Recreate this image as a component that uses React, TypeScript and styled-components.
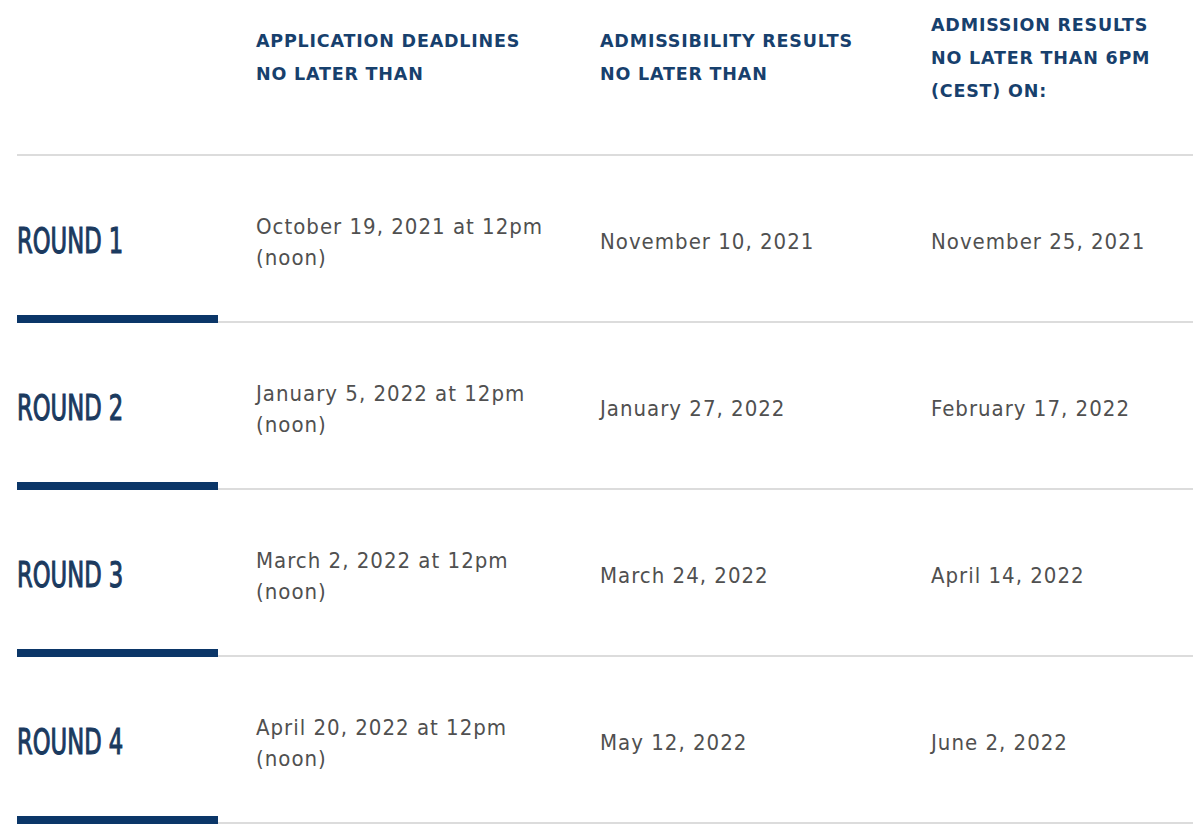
import React from "react";
import styled, { createGlobalStyle } from "styled-components";

const Global = createGlobalStyle`
  html, body { margin: 0; padding: 0; background: #ffffff; }
  body { font-family: "DejaVu Sans", sans-serif; }
`;

const Table = styled.div`
  width: 1176px;
  margin-left: 17px;
`;

const cols = "239px 344px 331px 1fr";

const HeaderRow = styled.div`
  display: grid;
  grid-template-columns: ${cols};
  align-items: center;
  box-sizing: border-box;
  height: 156px;
  padding-bottom: 38px;
  border-bottom: 2px solid #dcdcdc;
`;

const HeadCell = styled.div`
  font-family: "DejaVu Sans", sans-serif;
  font-weight: bold;
  font-size: 17.5px;
  line-height: 33px;
  letter-spacing: 0.8px;
  color: #17406d;
  text-transform: uppercase;
`;

const Row = styled.div`
  display: grid;
  grid-template-columns: ${cols};
  align-items: center;
  box-sizing: border-box;
  height: 167px;
  border-bottom: 2px solid #dcdcdc;
`;

const RoundCell = styled.div`
  align-self: stretch;
  width: 201px;
  box-sizing: border-box;
  display: flex;
  align-items: center;
  padding-top: 10px;
  border-bottom: 8px solid #0b3668;
  margin-bottom: -2px;
  position: relative;
`;

const RoundLabel = styled.span`
  display: inline-block;
  font-family: "DejaVu Sans Condensed", "DejaVu Sans", sans-serif;
  font-size: 36px;
  font-weight: normal;
  color: #1b3a5f;
  -webkit-text-stroke: 1.1px #1b3a5f;
  transform: scaleX(0.7);
  transform-origin: left center;
  white-space: nowrap;
`;

const DateCell = styled.div`
  font-family: "DejaVu Sans Condensed", "DejaVu Sans", sans-serif;
  font-size: 22px;
  line-height: 31px;
  color: #505050;
  letter-spacing: 1px;
  padding-top: 6px;
`;

type RoundData = {
  label: string;
  deadline: string;
  admissibility: string;
  admission: string;
};

const rounds: RoundData[] = [
  { label: "ROUND 1", deadline: "October 19, 2021 at 12pm", admissibility: "November 10, 2021", admission: "November 25, 2021" },
  { label: "ROUND 2", deadline: "January 5, 2022 at 12pm", admissibility: "January 27, 2022", admission: "February 17, 2022" },
  { label: "ROUND 3", deadline: "March 2, 2022 at 12pm", admissibility: "March 24, 2022", admission: "April 14, 2022" },
  { label: "ROUND 4", deadline: "April 20, 2022 at 12pm", admissibility: "May 12, 2022", admission: "June 2, 2022" },
];

export default function App() {
  return (
    <>
      <Global />
      <Table>
        <HeaderRow>
          <div />
          <HeadCell>
            Application deadlines
            <br />
            no later than
          </HeadCell>
          <HeadCell>
            Admissibility results
            <br />
            no later than
          </HeadCell>
          <HeadCell>
            Admission results
            <br />
            no later than 6pm
            <br />
            (CEST) on:
          </HeadCell>
        </HeaderRow>
        {rounds.map((r) => (
          <Row key={r.label}>
            <RoundCell>
              <RoundLabel>{r.label}</RoundLabel>
            </RoundCell>
            <DateCell>
              {r.deadline}
              <br />
              (noon)
            </DateCell>
            <DateCell>{r.admissibility}</DateCell>
            <DateCell>{r.admission}</DateCell>
          </Row>
        ))}
      </Table>
    </>
  );
}
